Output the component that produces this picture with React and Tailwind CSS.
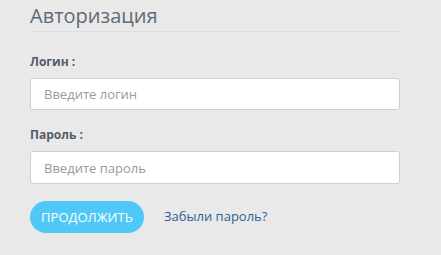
export default function App() {
  return (
    <div className="min-h-[255px] w-[441px] bg-[#e9e9e9] font-['Open_Sans',sans-serif]">
      <div className="ml-[30px] w-[370px] pt-[3px]">
        <h1 className="border-b border-[#dcdcdc] pb-[2px] text-[20px] leading-[26px] text-[#606a75]">Авторизация</h1>
        <form className="mt-[22px] flex flex-col">
          <label className="text-[12px] font-bold leading-[16px] text-[#555c66]">Логин :</label>
          <input
            type="text"
            placeholder="Введите логин"
            className="mt-[8px] h-[32px] w-full rounded-[3px] border border-[#cfcfcf] bg-white px-[13px] text-[13px] text-[#555] placeholder:text-[#9a9a9a] focus:outline-none"
          />
          <label className="mt-[17px] text-[12px] font-bold leading-[16px] text-[#555c66]">Пароль :</label>
          <input
            type="password"
            placeholder="Введите пароль"
            className="mt-[8px] h-[33px] w-full rounded-[3px] border border-[#cfcfcf] bg-white px-[13px] text-[13px] text-[#555] placeholder:text-[#9a9a9a] focus:outline-none"
          />
          <div className="mt-[17px] flex items-center gap-[20px]">
            <button
              type="button"
              className="h-[32px] w-[114px] rounded-full bg-[#4fc8f7] text-[13px] leading-none text-white"
            >
              ПРОДОЛЖИТЬ
            </button>
            <a href="#" className="text-[13px] text-[#2f5f95]">Забыли пароль?</a>
          </div>
        </form>
      </div>
    </div>
  )
}
